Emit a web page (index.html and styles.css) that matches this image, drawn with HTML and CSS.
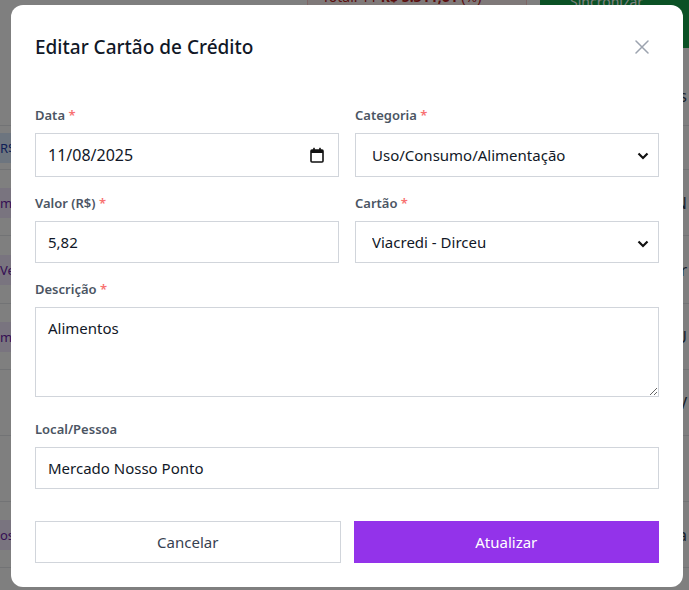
FILE: index.html
```html
<!DOCTYPE html>
<html lang="pt-BR">
<head>
<meta charset="utf-8">
<title>Editar Cartão de Crédito</title>
<link rel="stylesheet" href="styles.css">
</head>
<body>
<div class="page">
  <div class="topbar">
    <div class="total">Total: 11 <b>R$ 5.311,61</b> (%)</div>
    <div class="green">Sincronizar</div>
  </div>
  <div class="rows">
    <div class="row r1"><span class="cell-l"></span><span class="cell-r">s</span></div>
    <div class="row r2"><span class="cell-l badge blue">R$</span><span class="cell-r"></span></div>
    <div class="row r3"><span class="cell-l badge purple">mer</span><span class="cell-r">N</span></div>
    <div class="row r4"><span class="cell-l badge purple">Ve</span><span class="cell-r">r</span></div>
    <div class="row r5"><span class="cell-l badge purple">mer</span><span class="cell-r">U</span></div>
    <div class="row r6"><span class="cell-l"></span><span class="cell-r">V</span></div>
    <div class="row r7"><span class="cell-l"></span><span class="cell-r"></span></div>
    <div class="row r8"><span class="cell-l badge purple">os</span><span class="cell-r">a</span></div>
  </div>
</div>

<div class="overlay">
  <div class="modal">
    <div class="modal-header">
      <h2 class="title">Editar Cartão de Crédito</h2>
      <button class="close" aria-label="Fechar">
        <svg width="14" height="14" viewBox="0 0 14 14"><path d="M1 1L13 13M13 1L1 13" stroke="#9ca3af" stroke-width="1.5" fill="none" stroke-linecap="round"/></svg>
      </button>
    </div>
    <form class="form">
      <div class="grid">
        <div class="field">
          <label class="label">Data <span class="req">*</span></label>
          <div class="control control-date">
            <input class="bare date" type="text" value="11/08/2025">
            <svg class="cal" width="14" height="16" viewBox="0 0 14 16"><rect x="1" y="3" width="12" height="12" rx="1" fill="none" stroke="#111" stroke-width="1.6"/><rect x="1" y="3" width="12" height="3" fill="#111"/><rect x="3.2" y="0.8" width="1.6" height="3" fill="#111"/><rect x="9.2" y="0.8" width="1.6" height="3" fill="#111"/></svg>
          </div>
        </div>
        <div class="field">
          <label class="label">Categoria <span class="req">*</span></label>
          <div class="control control-select tall">
            <select class="bare sel"><option>Uso/Consumo/Alimentação</option></select>
            <svg class="chev" width="12" height="8" viewBox="0 0 12 8"><path d="M1.5 1.5L6 6L10.5 1.5" stroke="#111" stroke-width="2.2" fill="none"/></svg>
          </div>
        </div>
        <div class="field">
          <label class="label">Valor (R$) <span class="req">*</span></label>
          <div class="control">
            <input class="bare" type="text" value="5,82">
          </div>
        </div>
        <div class="field">
          <label class="label">Cartão <span class="req">*</span></label>
          <div class="control control-select">
            <select class="bare sel"><option>Viacredi - Dirceu</option></select>
            <svg class="chev" width="12" height="8" viewBox="0 0 12 8"><path d="M1.5 1.5L6 6L10.5 1.5" stroke="#111" stroke-width="2.2" fill="none"/></svg>
          </div>
        </div>
      </div>
      <div class="field">
        <label class="label">Descrição <span class="req">*</span></label>
        <textarea class="textarea">Alimentos</textarea>
      </div>
      <div class="field">
        <label class="label">Local/Pessoa</label>
        <div class="control">
          <input class="bare" type="text" value="Mercado Nosso Ponto">
        </div>
      </div>
      <div class="actions">
        <button type="button" class="btn btn-cancel">Cancelar</button>
        <button type="button" class="btn btn-primary">Atualizar</button>
      </div>
    </form>
  </div>
</div>
</body>
</html>
```

FILE: styles.css
```css
* { box-sizing: border-box; }
html, body { margin: 0; padding: 0; }
body {
  font-family: "Noto Sans", "Open Sans", sans-serif;
  background: #ffffff;
  width: 689px;
  height: 590px;
  overflow: hidden;
}
.page { width: 689px; }
.topbar {
  height: 48px;
  margin-top: -22px;
  display: flex;
  align-items: flex-start;
}
.total {
  margin-left: 307px;
  width: 220px;
  height: 32px;
  background: #fef2f2;
  border: 1px solid #fecaca;
  color: #b91c1c;
  font-size: 14px;
  padding: 8px 14px;
  white-space: nowrap;
}
.green {
  margin-left: 13px;
  flex: 1;
  height: 70px;
  background: #16a34a;
  color: #fff;
  font-size: 14px;
  padding: 14px 30px;
}
.rows { margin-top: 40px; }
.row {
  display: flex;
  justify-content: space-between;
  align-items: center;
  border-bottom: 1px solid #e5e7eb;
  font-size: 16px;
  color: #374151;
}
.r1 { height: 60px; }
.r2 { height: 44px; }
.r3 { height: 66px; }
.r4 { height: 68px; }
.r5 { height: 66px; }
.r6 { height: 66px; }
.r7 { height: 66px; }
.r8 { height: 66px; }
.cell-l { padding: 6px 0; min-width: 30px; }
.cell-r { padding-right: 2px; }
.badge { font-size: 13px; padding: 6px 4px 6px 0; }
.badge.blue { background: #dbeafe; color: #1e40af; }
.badge.purple { background: #f3e8ff; color: #6b21a8; }

.overlay {
  position: fixed;
  inset: 0;
  background: rgba(0, 0, 0, 0.5);
  padding: 5px 0 0 11px;
}
.modal {
  width: 672px;
  background: #fff;
  border-radius: 12px;
  padding: 24px;
}
.modal-header {
  display: flex;
  justify-content: space-between;
  align-items: center;
  margin-bottom: 40px;
}
.title {
  margin: 0;
  font-size: 19px;
  line-height: 36px;
  font-weight: 500;
  color: #111827;
}
.close {
  border: 0;
  background: none;
  padding: 0;
  margin-right: 10px;
  width: 14px;
  height: 14px;
  display: flex;
}
.form { display: flex; flex-direction: column; gap: 16px; }
.grid {
  display: grid;
  grid-template-columns: 1fr 1fr;
  gap: 16px;
}
.field { display: flex; flex-direction: column; }
.label {
  font-size: 13px;
  line-height: 20px;
  font-weight: 600;
  color: #4b5563;
  margin-bottom: 8px;
}
.req { color: #f87171; }
.control {
  position: relative;
  height: 42px;
  border: 1px solid #d1d5db;
  display: flex;
  align-items: center;
  background: #fff;
}
.control-date, .tall { height: 44px; }
.bare {
  border: 0;
  outline: none;
  background: transparent;
  font-family: inherit;
  font-size: 15px;
  color: #111827;
  width: 100%;
  height: 100%;
  padding: 0 12px;
}
.date { font-size: 16px; }
.sel {
  appearance: none;
  -webkit-appearance: none;
  padding-left: 16px;
}
.cal { position: absolute; right: 14px; top: 13px; }
.chev { position: absolute; right: 9px; top: 18px; pointer-events: none; }
.textarea {
  display: block;
  height: 90px;
  border: 1px solid #d1d5db;
  font-family: inherit;
  font-size: 15px;
  color: #111827;
  padding: 10px 12px;
  resize: vertical;
  outline: none;
  margin-bottom: 6px;
}
.actions {
  display: grid;
  grid-template-columns: 1fr 1fr;
  gap: 13px;
  margin-top: 16px;
}
.btn {
  height: 42px;
  font-family: inherit;
  font-size: 15px;
  border: 1px solid #d1d5db;
  background: #fff;
  color: #374151;
}
.btn-primary {
  background: #9333ea;
  border-color: #9333ea;
  color: #fff;
}
```
